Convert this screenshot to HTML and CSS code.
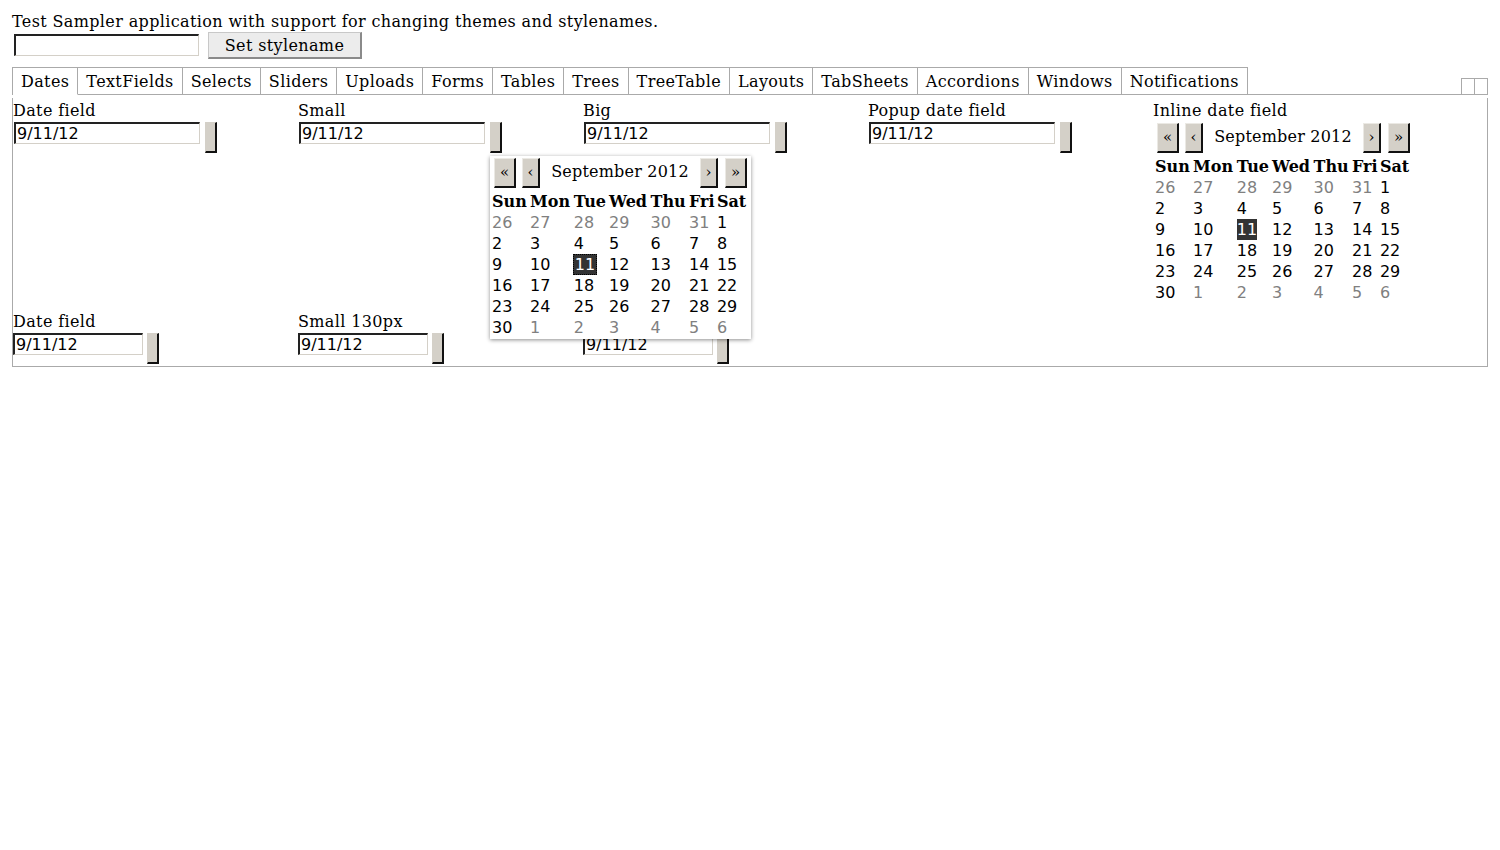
FILE: index.html
```html
<!DOCTYPE html>
<html>
<head>
<meta charset="utf-8">
<title>Test Sampler</title>
<link rel="stylesheet" href="styles.css">
</head>
<body>
<div class="app">
  <div class="intro">Test Sampler application with support for changing themes and stylenames.</div>
  <div class="stylebar">
    <input class="style-input" type="text">
    <button class="style-btn">Set stylename</button>
  </div>
  <div class="tabbar">
    <div class="tabs">
      <div class="tab selected">Dates</div>
      <div class="tab">TextFields</div>
      <div class="tab">Selects</div>
      <div class="tab">Sliders</div>
      <div class="tab">Uploads</div>
      <div class="tab">Forms</div>
      <div class="tab">Tables</div>
      <div class="tab">Trees</div>
      <div class="tab">TreeTable</div>
      <div class="tab">Layouts</div>
      <div class="tab">TabSheets</div>
      <div class="tab">Accordions</div>
      <div class="tab">Windows</div>
      <div class="tab">Notifications</div>
    </div>
    <div class="tabfill"></div>
    <div class="scrollers"><span class="scroller"></span><span class="scroller"></span></div>
  </div>
  <div class="panel">
    <div class="grid">
      <div class="cell">
        <div class="caption">Date field</div>
        <div class="field"><div class="date-input wide">9/11/12</div><div class="date-btn"></div></div>
      </div>
      <div class="cell">
        <div class="caption">Small</div>
        <div class="field has-popup"><div class="date-input wide">9/11/12</div><div class="date-btn"></div>
          <div class="popup">
            <div class="cal-nav">
              <div class="nav-btn dbl">&laquo;</div>
              <div class="nav-btn sgl">&lsaquo;</div>
              <div class="cal-title">September 2012</div>
              <div class="nav-btn sgl">&rsaquo;</div>
              <div class="nav-btn dbl last">&raquo;</div>
            </div>
            <table class="cal">
              <tr><th>Sun</th><th>Mon</th><th>Tue</th><th>Wed</th><th>Thu</th><th>Fri</th><th>Sat</th></tr>
              <tr><td class="off">26</td><td class="off">27</td><td class="off">28</td><td class="off">29</td><td class="off">30</td><td class="off">31</td><td>1</td></tr>
              <tr><td>2</td><td>3</td><td>4</td><td>5</td><td>6</td><td>7</td><td>8</td></tr>
              <tr><td>9</td><td>10</td><td><span class="sel focus">11</span></td><td>12</td><td>13</td><td>14</td><td>15</td></tr>
              <tr><td>16</td><td>17</td><td>18</td><td>19</td><td>20</td><td>21</td><td>22</td></tr>
              <tr><td>23</td><td>24</td><td>25</td><td>26</td><td>27</td><td>28</td><td>29</td></tr>
              <tr><td>30</td><td class="off">1</td><td class="off">2</td><td class="off">3</td><td class="off">4</td><td class="off">5</td><td class="off">6</td></tr>
            </table>
          </div>
        </div>
      </div>
      <div class="cell">
        <div class="caption">Big</div>
        <div class="field"><div class="date-input wide">9/11/12</div><div class="date-btn"></div></div>
      </div>
      <div class="cell">
        <div class="caption">Popup date field</div>
        <div class="field"><div class="date-input wide">9/11/12</div><div class="date-btn"></div></div>
      </div>
      <div class="cell inline-cell">
        <div class="caption">Inline date field</div>
        <div class="inline-cal">
          <div class="cal-nav">
            <div class="nav-btn dbl">&laquo;</div>
            <div class="nav-btn sgl">&lsaquo;</div>
            <div class="cal-title">September 2012</div>
            <div class="nav-btn sgl">&rsaquo;</div>
            <div class="nav-btn dbl last">&raquo;</div>
          </div>
          <table class="cal">
            <tr><th>Sun</th><th>Mon</th><th>Tue</th><th>Wed</th><th>Thu</th><th>Fri</th><th>Sat</th></tr>
            <tr><td class="off">26</td><td class="off">27</td><td class="off">28</td><td class="off">29</td><td class="off">30</td><td class="off">31</td><td>1</td></tr>
            <tr><td>2</td><td>3</td><td>4</td><td>5</td><td>6</td><td>7</td><td>8</td></tr>
            <tr><td>9</td><td>10</td><td><span class="sel">11</span></td><td>12</td><td>13</td><td>14</td><td>15</td></tr>
            <tr><td>16</td><td>17</td><td>18</td><td>19</td><td>20</td><td>21</td><td>22</td></tr>
            <tr><td>23</td><td>24</td><td>25</td><td>26</td><td>27</td><td>28</td><td>29</td></tr>
            <tr><td>30</td><td class="off">1</td><td class="off">2</td><td class="off">3</td><td class="off">4</td><td class="off">5</td><td class="off">6</td></tr>
          </table>
        </div>
      </div>

      <div class="cell">
        <div class="caption">Date field</div>
        <div class="field"><div class="date-input narrow">9/11/12</div><div class="date-btn"></div></div>
      </div>
      <div class="cell">
        <div class="caption">Small 130px</div>
        <div class="field"><div class="date-input narrow">9/11/12</div><div class="date-btn"></div></div>
      </div>
      <div class="cell">
        <div class="caption">&nbsp;</div>
        <div class="field"><div class="date-input narrow">9/11/12</div><div class="date-btn"></div></div>
      </div>
    </div>
  </div>
</div>
</body>
</html>
```

FILE: styles.css
```css
html, body {
  margin: 0;
  padding: 0;
  background: #fff;
}
body {
  font-family: "DejaVu Serif", serif;
  font-size: 16px;
  letter-spacing: 0.37px;
  color: #000;
}
.app {
  padding: 13px 12px 0 12px;
}
.intro {
  line-height: 18px;
  height: 19px;
}
.stylebar {
  display: flex;
  align-items: flex-start;
  height: 35px;
}
.style-input {
  margin: 2px 0 0 2px;
  width: 185px;
  height: 22px;
  box-sizing: border-box;
  border-style: solid;
  border-width: 2px 1px 1px 2px;
  border-color: #222 #d4d0c8 #d4d0c8 #222;
  padding: 0;
}
.style-btn {
  margin-left: 9px;
  width: 154px;
  height: 27px;
  box-sizing: border-box;
  background: #ececec;
  border-style: solid;
  border-width: 1px 2px 2px 1px;
  border-color: #c8c8c8 #8a8a8a #8a8a8a #c8c8c8;
  font-family: "DejaVu Serif", serif;
  font-size: 16px;
  letter-spacing: 0.37px;
  color: #000;
  padding: 0;
}
.tabbar {
  display: flex;
  align-items: flex-end;
  height: 28px;
}
.tabs {
  display: flex;
  border-top: 1px solid #aaa;
  border-left: 1px solid #aaa;
}
.tab {
  height: 26px;
  line-height: 27px;
  padding: 0 8px 0 8px;
  border-right: 1px solid #aaa;
  border-bottom: 1px solid #aaa;
}
.tab.selected {
  border-bottom-color: transparent;
}
.tabfill {
  flex: 1;
  border-bottom: 1px solid #aaa;
}
.scrollers {
  display: flex;
  border-bottom: 1px solid #aaa;
}
.scroller {
  width: 12px;
  height: 15px;
  border: 1px solid #aaa;
  border-bottom: none;
  border-right: none;
}
.scroller:last-child {
  border-right: 1px solid #aaa;
}
.panel {
  margin-top: 3px;
  border: 1px solid #aaa;
  border-top: none;
  padding: 3px 0 2px 0;
}
.grid {
  display: grid;
  grid-template-columns: repeat(5, 285px);
  row-gap: 9px;
}
.cell {
  position: relative;
}
.caption {
  line-height: 20px;
  height: 21px;
}
.field {
  display: flex;
  align-items: flex-start;
  position: relative;
  height: 31px;
}
.date-input {
  box-sizing: border-box;
  height: 22px;
  border-style: solid;
  border-width: 2px 1px 1px 2px;
  border-color: #222 #d4d0c8 #d4d0c8 #222;
  font-family: "DejaVu Sans", sans-serif;
  font-size: 16px;
  letter-spacing: 0;
  line-height: 19px;
  padding-left: 1px;
}
.date-input.wide {
  width: 186px;
  margin-left: 1px;
}
.date-input.narrow {
  width: 130px;
}
.date-btn {
  margin-left: 5px;
  box-sizing: border-box;
  width: 12px;
  height: 31px;
  background: #d4d0c8;
  border-style: solid;
  border-width: 1px 2px 2px 1px;
  border-color: #d4d0c8 #111 #111 #d4d0c8;
}
.narrow + .date-btn {
  margin-left: 4px;
}
.popup {
  position: absolute;
  left: 192px;
  top: 34px;
  width: 261px;
  box-sizing: border-box;
  padding: 2px 2px 1px 2px;
  background: #fff;
  box-shadow: 0 1px 4px rgba(0, 0, 0, 0.45);
  z-index: 10;
}
.inline-cal {
  width: 257px;
  margin: 1px 0 0 2px;
}
.cal-nav {
  display: flex;
  align-items: stretch;
  height: 30px;
  margin: 0 2px 3px 2px;
}
.nav-btn {
  box-sizing: border-box;
  background: #d4d0c8;
  border-style: solid;
  border-width: 1px 2px 2px 1px;
  border-color: #ebe9e4 #111 #111 #ebe9e4;
  font-size: 15px;
  letter-spacing: 0;
  line-height: 27px;
  text-align: center;
}
.nav-btn.dbl {
  width: 22px;
}
.nav-btn.sgl {
  width: 18px;
  margin-left: 6px;
}
.nav-btn.sgl + .nav-btn.dbl {
  margin-left: 7px;
}
.cal-title + .nav-btn.sgl {
  margin-left: 0;
}
.cal-title {
  flex: 1;
  text-align: center;
  line-height: 28px;
  font-size: 16px;
  letter-spacing: 0.2px;
}
.cal {
  border-collapse: collapse;
  border-spacing: 0;
  width: 257px;
}
.cal th {
  font-weight: bold;
  text-align: left;
  padding: 0;
  letter-spacing: 0;
  line-height: 21px;
  height: 21px;
}
.cal td {
  padding: 0;
  text-align: left;
  line-height: 21px;
  height: 21px;
  font-family: "DejaVu Sans", sans-serif;
  font-size: 16px;
  letter-spacing: 0;
}
.cal td.off {
  color: #808080;
}
.sel {
  display: inline-block;
  vertical-align: top;
  background: #333;
  color: #fff;
  line-height: 21px;
  height: 21px;
}
.sel.focus {
  box-sizing: border-box;
  margin-left: -1px;
  padding: 0 1px;
  line-height: 19px;
  border: 1px dotted #000;
}
```
